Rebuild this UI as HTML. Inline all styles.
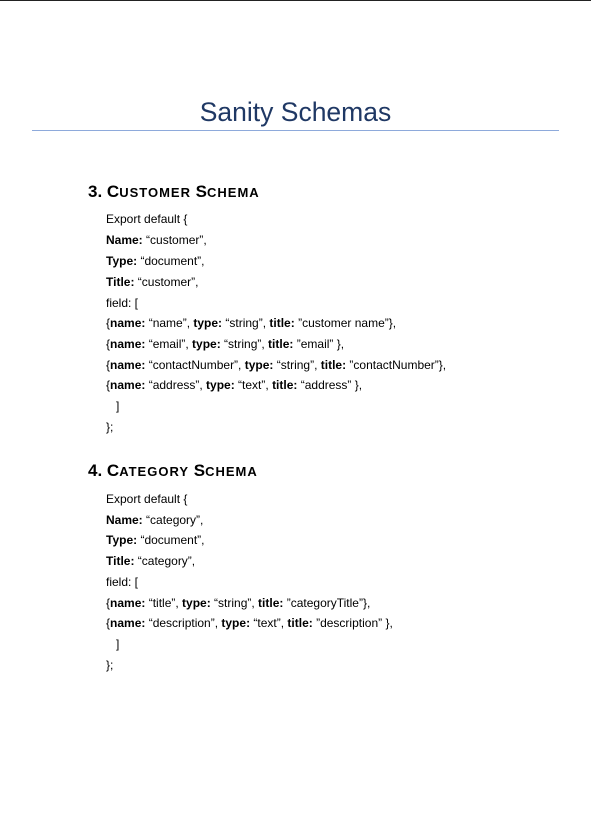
<!DOCTYPE html>
<html><head><meta charset="utf-8"><style>
html,body{margin:0;padding:0;background:#fff;}
body{width:591px;height:838px;position:relative;overflow:hidden;font-family:"Liberation Sans",Arial,sans-serif;color:#000;}
.topbar{position:absolute;left:0;top:0;width:591px;height:1px;background:#222;}
.title{position:absolute;left:0;width:591px;top:95px;text-align:center;font-size:26.5px;line-height:34px;color:#1f3864;}
.rule{position:absolute;left:32px;width:527px;top:130px;height:1px;background:#8eaadb;}
.h{position:absolute;left:88px;font-weight:bold;font-size:17px;line-height:20px;}
.h .sc{font-size:13px;letter-spacing:1px;}
.l{position:absolute;left:106px;font-size:12px;line-height:16px;white-space:pre;}
</style></head><body>
<div class="topbar"></div>
<div class="title">Sanity Schemas</div>
<div class="rule"></div>

<div class="h" style="top:182px">3.&nbsp;C<span class="sc">USTOMER</span> S<span class="sc">CHEMA</span></div>
<div class="l" style="top:211px">Export default {</div>
<div class="l" style="top:232px"><b>Name:</b> “customer”,</div>
<div class="l" style="top:253px"><b>Type:</b> “document”,</div>
<div class="l" style="top:274px"><b>Title:</b> “customer”,</div>
<div class="l" style="top:295px">field: [</div>
<div class="l" style="top:315px">{<b>name:</b> “name”, <b>type:</b> “string”, <b>title:</b> ”customer name”},</div>
<div class="l" style="top:336px">{<b>name:</b> “email”, <b>type:</b> “string”, <b>title:</b> ”email” },</div>
<div class="l" style="top:357px">{<b>name:</b> “contactNumber”, <b>type:</b> “string”, <b>title:</b> ”contactNumber”},</div>
<div class="l" style="top:377px">{<b>name:</b> “address”, <b>type:</b> “text”, <b>title:</b> “address” },</div>
<div class="l" style="top:398px">   ]</div>
<div class="l" style="top:419px">};</div>

<div class="h" style="top:461px">4.&nbsp;C<span class="sc">ATEGORY</span> S<span class="sc">CHEMA</span></div>
<div class="l" style="top:491px">Export default {</div>
<div class="l" style="top:512px"><b>Name:</b> “category”,</div>
<div class="l" style="top:532px"><b>Type:</b> “document”,</div>
<div class="l" style="top:553px"><b>Title:</b> “category”,</div>
<div class="l" style="top:574px">field: [</div>
<div class="l" style="top:595px">{<b>name:</b> “title”, <b>type:</b> “string”, <b>title:</b> ”categoryTitle”},</div>
<div class="l" style="top:615px">{<b>name:</b> “description”, <b>type:</b> “text”, <b>title:</b> ”description” },</div>
<div class="l" style="top:636px">   ]</div>
<div class="l" style="top:657px">};</div>
</body></html>
